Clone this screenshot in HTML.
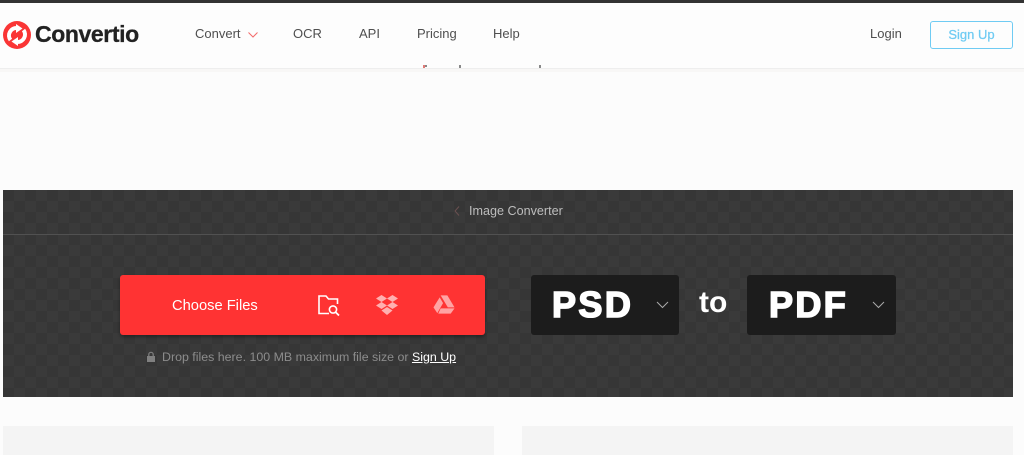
<!DOCTYPE html>
<html lang="en">
<head>
<meta charset="utf-8">
<title>PSD to PDF</title>
<style>
html,body{margin:0;padding:0}
body{position:relative;width:1024px;height:455px;overflow:hidden;background:#fcfcfc;font-family:"Liberation Sans",sans-serif}
.a{position:absolute;white-space:nowrap}
#top{left:0;top:0;width:1024px;height:3px;background:#333}
#hdr{left:0;top:3px;width:1024px;height:65px;background:#fdfdfd;border-bottom:1px solid #eee}
#strip{left:0;top:69px;width:1024px;height:3px;background:#f8f7f6}
.nav{top:26px;font-size:13px;line-height:16px;color:#4f4f4f}
#logo{left:35px;top:20px;font-size:23px;line-height:28px;font-weight:bold;color:#222;letter-spacing:-.4px;-webkit-text-stroke:.3px #222}
#btn{left:930px;top:21px;width:81px;height:26px;border:1px solid #6fcbf3;border-radius:3px;color:#6fcbf3;font-size:13px;line-height:25px;text-align:center;-webkit-text-stroke:.25px #6fcbf3}
#panel{left:3px;top:190px;width:1010px;height:207px;background-color:#383838;
background-image:conic-gradient(#3a3a3a 25%,#363636 0 50%,#3a3a3a 0 75%,#363636 0);background-size:22px 22px}
#line{left:3px;top:234px;width:1010px;height:1px;background:#515151}
#crumb{left:469px;top:203px;font-size:12.6px;line-height:16px;color:#bdbdbd}
#red{left:120px;top:275px;width:365px;height:60px;background:#ff3333;border-radius:3px;box-shadow:0 2px 3px rgba(0,0,0,.35)}
#cf{left:172px;top:297px;font-size:14.7px;line-height:18px;color:#fff}
#drop{left:162px;top:349px;font-size:12.4px;line-height:16px;color:#8c8c8c}
#drop u{color:#fff}
.sel{top:275px;height:60px;width:148px;background:#1c1c1c;border-radius:3px}
.fmt{top:284px;font-size:36px;line-height:42px;font-weight:bold;color:#fff;-webkit-text-stroke:1.6px #fff;letter-spacing:2.4px}
#to{left:699px;top:285px;font-size:30px;line-height:36px;font-weight:bold;color:#fff}
.box{top:426px;height:29px;background:#f4f4f4}
.d{top:65px;width:2px;height:3px;background:#888}
</style>
</head>
<body>
<div class="a" id="top"></div>
<div class="a" id="hdr"></div>
<div class="a" id="strip"></div>
<div class="a d" style="left:423px;background:#e07a76"></div>
<div class="a d" style="left:425px;height:2px"></div>
<div class="a d" style="left:459px"></div>
<div class="a d" style="left:539px"></div>

<svg class="a" style="left:2px;top:20px" width="30" height="30" viewBox="0 0 30 30">
<circle cx="15" cy="15" r="14" fill="#fa3535"/>
<path d="M8.500 20 A7.500 7.500 0 0 1 15 8" fill="none" stroke="#fff" stroke-width="4"/>
<path d="M14 4 L20.500 8.500 L14 13Z" fill="#fff"/>
<path d="M21.500 10 A7.500 7.500 0 0 1 15 22" fill="none" stroke="#fff" stroke-width="4"/>
<path d="M16 26 L9.500 21.500 L16 17Z" fill="#fff"/>
</svg>
<div class="a" id="logo">Convertio</div>

<div class="a nav" style="left:195px">Convert</div>
<svg class="a" style="left:248px;top:32px" width="10" height="6" viewBox="0 0 10 6"><path d="M.5 .5 L5 5 L9.500 .5" fill="none" stroke="#f36a6a" stroke-width="1"/></svg>
<div class="a nav" style="left:293px">OCR</div>
<div class="a nav" style="left:359px">API</div>
<div class="a nav" style="left:417px">Pricing</div>
<div class="a nav" style="left:493px">Help</div>
<div class="a nav" style="left:870px">Login</div>
<div class="a" id="btn">Sign Up</div>

<div class="a" id="panel"></div>
<div class="a" id="line"></div>
<svg class="a" style="left:454px;top:206px" width="6" height="10" viewBox="0 0 6 10"><path d="M5 .5 L1 5 L5 9.500" fill="none" stroke="#6a5050" stroke-width="1"/></svg>
<div class="a" id="crumb">Image Converter</div>

<div class="a" id="red"></div>
<div class="a" id="cf">Choose Files</div>
<svg class="a" style="left:317px;top:294px" width="24" height="23" viewBox="0 0 24 23">
<path d="M12 19.500 H2 V2 H9 L11.500 5 H20.500 V10" fill="none" stroke="#fff" stroke-width="1.600"/>
<circle cx="16" cy="15.500" r="3.600" fill="none" stroke="#fff" stroke-width="1.600"/>
<path d="M18.700 18.200 L22 21.500" stroke="#fff" stroke-width="1.800"/>
</svg>
<svg class="a" style="left:375px;top:294px" width="24" height="22" viewBox="0 0 24 22" fill="#ffb0b0">
<path d="M6.500 1 L12 4.500 L6.500 8 L1 4.500Z"/>
<path d="M17.500 1 L23 4.500 L17.500 8 L12 4.500Z"/>
<path d="M6.500 8 L12 11.500 L6.500 15 L1 11.500Z"/>
<path d="M17.500 8 L23 11.500 L17.500 15 L12 11.500Z"/>
<path d="M12 13 L17.500 16.500 L12 21 L6.500 16.500Z"/>
</svg>
<svg class="a" style="left:433px;top:294px" width="22" height="21" viewBox="0 0 23 21" fill="#ffa3a3">
<path d="M8 1 H15 L22.500 13.500 H15.500Z"/>
<path d="M7 3 L10.500 9 L4.500 19.500 L.5 13.500Z"/>
<path d="M8 14.500 H22.500 L18.500 20 H5.500Z"/>
</svg>
<svg class="a" style="left:146px;top:351px" width="10" height="12" viewBox="0 0 10 12" fill="#808080">
<rect x="1" y="5" width="8" height="6"/>
<path d="M2.800 5 V3.500 A2.200 2.200 0 0 1 7.200 3.500 V5" fill="none" stroke="#808080" stroke-width="1.200"/>
</svg>
<div class="a" id="drop">Drop files here. 100 MB maximum file size or <u>Sign Up</u></div>

<div class="a sel" style="left:531px"></div>
<div class="a fmt" style="left:552px">PSD</div>
<svg class="a" style="left:656px;top:301px" width="13" height="8" viewBox="0 0 13 8"><path d="M1 1 L6.500 6.500 L12 1" fill="none" stroke="#aaa" stroke-width="1"/></svg>
<div class="a" id="to">to</div>
<div class="a sel" style="left:747px;width:149px"></div>
<div class="a fmt" style="left:769px">PDF</div>
<svg class="a" style="left:872px;top:301px" width="13" height="8" viewBox="0 0 13 8"><path d="M1 1 L6.500 6.500 L12 1" fill="none" stroke="#aaa" stroke-width="1"/></svg>

<div class="a box" style="left:3px;width:491px"></div>
<div class="a box" style="left:522px;width:491px"></div>
</body>
</html>
